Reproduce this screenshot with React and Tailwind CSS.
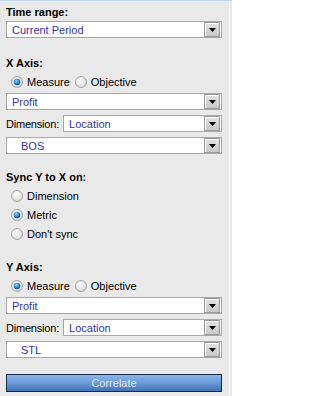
import React from "react";

const font = { fontFamily: '"Liberation Sans", Arial, sans-serif' };

function Arrow() {
  return (
    <div className="flex h-[15px] w-[16px] items-center justify-center border border-[#9a9a9a] bg-gradient-to-b from-[#e4e4e4] to-[#c8c8c8] shadow-[inset_1px_1px_0_#ffffff]">
      <svg width="7" height="4" viewBox="0 0 7 4">
        <path d="M0 0 H7 L3.5 4 Z" fill="#000" />
      </svg>
    </div>
  );
}

function Select({ value, className = "", pad = "pl-[5px]" }) {
  return (
    <div
      className={`flex h-[17px] items-center justify-between border border-[#a9a9a9] bg-white pr-[1px] ${className}`}
    >
      <span className={`text-[11px] leading-[14px] text-[#3434a4] ${pad}`}>{value}</span>
      <Arrow />
    </div>
  );
}

function Radio({ checked }) {
  return (
    <svg width="12" height="12" viewBox="0 0 12 12" className="shrink-0">
      <defs>
        <radialGradient id="off" cx="0.4" cy="0.35" r="0.7">
          <stop offset="0" stopColor="#ffffff" />
          <stop offset="1" stopColor="#d6d6d6" />
        </radialGradient>
        <radialGradient id="on" cx="0.4" cy="0.35" r="0.7">
          <stop offset="0" stopColor="#9fd6f6" />
          <stop offset="0.5" stopColor="#2f8fd0" />
          <stop offset="1" stopColor="#0b4f8a" />
        </radialGradient>
      </defs>
      <circle cx="6" cy="6" r="5.5" fill="url(#off)" stroke="#a4a4a4" strokeWidth="1" />
      {checked && <circle cx="6" cy="6" r="3.3" fill="url(#on)" />}
    </svg>
  );
}

function RadioItem({ checked, label }) {
  return (
    <div className="flex items-center gap-[4px]">
      <Radio checked={checked} />
      <span className="text-[11px] leading-[14px] text-black">{label}</span>
    </div>
  );
}

function Label({ children, className = "" }) {
  return <div className={`text-[11px] font-bold leading-[14px] text-black ${className}`}>{children}</div>;
}

function AxisSection({ title, value }) {
  return (
    <div className="flex flex-col">
      <Label>{title}</Label>
      <div className="mt-[5px] flex h-[14px] items-center gap-[5px] pl-[5px]">
        <RadioItem checked label="Measure" />
        <RadioItem label="Objective" />
      </div>
      <Select value="Profit" className="mt-[4px]" />
      <div className="mt-[5px] flex items-center gap-[4px]">
        <span className="text-[11px] leading-[14px] text-black tracking-[-0.2px]">Dimension:</span>
        <Select value="Location" className="flex-1" />
      </div>
      <Select value={value} className="mt-[5px]" pad="pl-[14px]" />
    </div>
  );
}

export default function App() {
  return (
    <div style={font} className="h-[396px] w-[232px] overflow-hidden bg-[#e9e9e9]">
      <div className="h-[1px] bg-[#c6d8ec]" />
      <div className="flex h-[395px] w-[230px] flex-col border-r border-[#f6f6f6] pl-[6px] pr-[7px] pt-[4px]">
        <Label>Time range:</Label>
        <Select value="Current Period" className="mt-[2px]" />

        <div className="mt-[18px]">
          <AxisSection title="X Axis:" value="BOS" />
        </div>

        <Label className="mt-[16px]">Sync Y to X on:</Label>
        <div className="mt-[2px] flex flex-col pl-[5px]">
          <div className="flex h-[19px] items-center">
            <RadioItem label="Dimension" />
          </div>
          <div className="flex h-[19px] items-center">
            <RadioItem checked label="Metric" />
          </div>
          <div className="flex h-[19px] items-center">
            <RadioItem label="Don't sync" />
          </div>
        </div>

        <div className="mt-[17px]">
          <AxisSection title="Y Axis:" value="STL" />
        </div>

        <button className="mt-[16px] flex h-[18px] items-center justify-center border border-[#1c2848] bg-gradient-to-b from-[#8cb6e8] via-[#6a9ad8] to-[#4572b4] text-[11px] leading-[14px] text-[#dfe7f2]">
          Correlate
        </button>
      </div>
    </div>
  );
}
